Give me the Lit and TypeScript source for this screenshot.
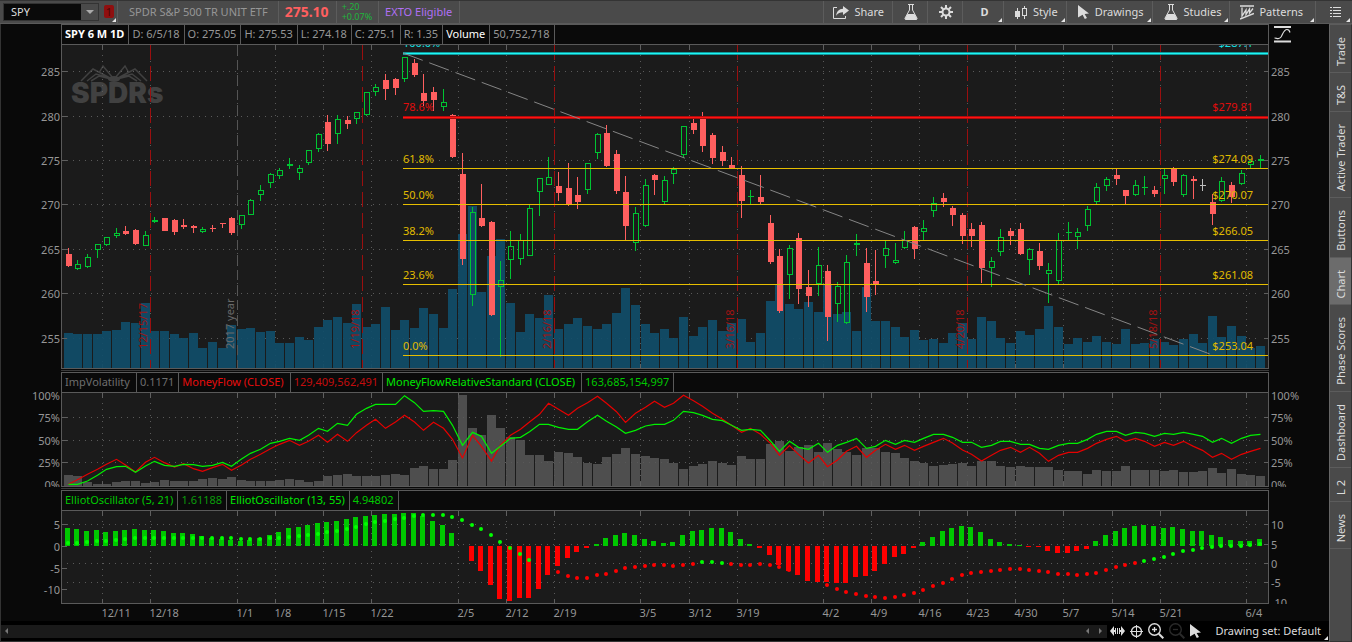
import { LitElement, html, svg, css, nothing } from "lit";
import { customElement, state } from "lit/decorators.js";
import { classMap } from "lit/directives/class-map.js";

type Kind = "g" | "r" | "n";
type Candle = [Kind, number, number, number, number];

/* Vertical positions in the series below are kept in thirds of a pixel. */
const UNIT = 3;

/* kind, high, body top, body bottom, low */
const CANDLES: Candle[] = [
  ["r", 624, 642, 678, 681], ["g", 660, 672, 688, 690], ["g", 642, 651, 682, 684], ["g", 612, 612, 630, 654],
  ["g", 591, 591, 615, 618], ["g", 564, 579, 588, 594], ["r", 558, 573, 582, 585], ["r", 567, 570, 612, 615],
  ["g", 573, 585, 618, 618], ["g", 531, 540, 546, 549], ["r", 534, 534, 573, 573], ["r", 537, 540, 576, 585],
  ["r", 537, 555, 561, 567], ["r", 555, 558, 564, 579], ["g", 561, 567, 576, 579], ["r", 555, 564, 567, 576],
  ["r", 549, 549, 552, 564], ["r", 531, 534, 579, 585], ["g", 525, 525, 555, 567], ["g", 477, 480, 525, 525],
  ["g", 435, 450, 465, 483], ["g", 399, 402, 430, 444], ["g", 384, 390, 408, 417], ["g", 354, 372, 378, 387],
  ["g", 375, 384, 399, 420], ["g", 330, 330, 369, 375], ["g", 279, 282, 327, 336], ["r", 225, 246, 312, 333],
  ["g", 225, 237, 282, 312], ["r", 228, 240, 252, 267], ["g", 216, 216, 237, 252], ["g", 156, 156, 225, 228],
  ["g", 132, 141, 156, 168], ["r", 102, 120, 147, 180], ["r", 114, 117, 144, 165], ["g", 51, 51, 117, 126],
  ["r", 57, 69, 105, 111], ["r", 102, 159, 183, 198], ["r", 141, 156, 180, 213], ["g", 147, 186, 202, 213],
  ["r", 222, 225, 351, 354], ["r", 339, 402, 657, 675], ["g", 501, 516, 765, 798], ["r", 432, 534, 558, 561],
  ["r", 543, 546, 825, 828], ["g", 663, 720, 741, 950], ["g", 573, 618, 660, 717], ["g", 582, 600, 657, 675],
  ["g", 495, 504, 648, 648], ["g", 414, 414, 456, 528], ["g", 351, 411, 435, 435], ["r", 396, 438, 459, 483],
  ["r", 369, 444, 493, 498], ["r", 411, 465, 486, 507], ["g", 369, 369, 450, 462], ["g", 279, 282, 339, 357],
  ["r", 255, 279, 378, 381], ["r", 330, 342, 453, 462], ["r", 408, 456, 558, 601], ["g", 501, 519, 609, 633],
  ["g", 417, 435, 558, 561], ["r", 402, 405, 420, 465], ["g", 408, 420, 486, 492], ["g", 381, 387, 402, 432],
  ["g", 258, 258, 345, 354], ["r", 234, 249, 270, 282], ["r", 216, 234, 318, 336], ["r", 279, 285, 354, 372],
  ["r", 318, 336, 363, 378], ["r", 351, 375, 385, 385], ["r", 378, 405, 483, 534], ["g", 450, 467, 471, 492],
  ["r", 405, 471, 486, 492], ["r", 525, 549, 666, 672], ["r", 627, 648, 813, 819], ["g", 615, 624, 705, 777],
  ["r", 579, 594, 747, 792], ["r", 690, 741, 768, 801], ["g", 621, 675, 732, 768], ["r", 675, 693, 831, 903],
  ["g", 726, 738, 792, 846], ["g", 645, 666, 849, 852], ["g", 582, 609, 615, 648], ["r", 624, 669, 771, 816],
  ["r", 630, 723, 735, 765], ["g", 601, 624, 648, 684], ["g", 609, 660, 669, 672], ["g", 573, 601, 624, 627],
  ["r", 558, 561, 627, 657], ["g", 540, 564, 576, 600], ["g", 471, 489, 513, 531], ["r", 459, 474, 486, 501],
  ["r", 498, 504, 525, 558], ["r", 519, 525, 588, 612], ["r", 549, 567, 588, 621], ["r", 546, 555, 684, 729],
  ["g", 651, 663, 684, 741], ["g", 567, 591, 636, 648], ["r", 564, 573, 588, 615], ["r", 549, 567, 642, 645],
  ["g", 624, 627, 660, 705], ["r", 609, 633, 678, 690], ["g", 669, 690, 702, 789], ["g", 579, 601, 723, 732],
  ["g", 546, 576, 579, 601], ["g", 564, 576, 591, 627], ["g", 498, 507, 558, 573], ["g", 429, 441, 486, 492],
  ["g", 411, 417, 438, 453], ["r", 387, 405, 417, 435], ["r", 450, 450, 468, 492], ["g", 420, 435, 465, 468],
  ["g", 408, 441, 444, 465], ["r", 438, 450, 462, 471], ["g", 387, 405, 417, 462], ["r", 381, 384, 426, 438],
  ["g", 402, 405, 465, 471], ["r", 408, 417, 423, 477], ["n", 417, 435, 438, 453], ["r", 462, 486, 522, 555],
  ["g", 411, 423, 483, 486], ["r", 426, 435, 471, 489], ["g", 390, 399, 432, 435], ["g", 360, 363, 375, 385],
  ["g", 345, 357, 363, 384],
];

const VOLUME = [
  879, 882, 882, 882, 873, 870, 846, 849, 789, 873, 873, 882, 894, 879, 924, 906, 924, 855, 867, 864, 876, 873, 909, 909,
  891, 900, 861, 840, 831, 849, 792, 861, 852, 801, 870, 840, 864, 804, 822, 864, 747, 582, 498, 756, 648, 597, 789, 876,
  822, 834, 765, 867, 852, 834, 858, 867, 852, 819, 744, 795, 852, 879, 867, 894, 831, 888, 861, 840, 873, 849, 837, 906,
  879, 783, 735, 792, 807, 786, 816, 732, 822, 816, 873, 741, 843, 843, 861, 891, 870, 900, 897, 909, 879, 849, 897, 831,
  843, 894, 909, 873, 885, 867, 798, 861, 912, 894, 906, 888, 906, 912, 867, 912, 909, 897, 906, 915, 897, 882, 909, 828,
  891, 858, 888, 924, 918,
];

const IMP_VOL = [
  315, 318, 336, 342, 342, 336, 333, 333, 339, 336, 330, 333, 333, 333, 327, 324, 327, 321, 330, 333, 333, 333, 330, 327,
  330, 336, 333, 318, 315, 312, 318, 318, 318, 315, 312, 315, 294, 288, 297, 297, 270, 75, 174, 195, 135, 174, 201, 210,
  255, 255, 273, 246, 249, 261, 279, 282, 261, 252, 234, 252, 258, 264, 267, 279, 297, 288, 282, 273, 279, 285, 258, 267,
  267, 222, 213, 243, 231, 225, 246, 219, 237, 246, 255, 234, 234, 246, 249, 264, 273, 279, 288, 285, 282, 279, 288, 273,
  273, 288, 291, 288, 291, 291, 291, 300, 303, 303, 312, 300, 303, 303, 288, 300, 300, 300, 303, 300, 306, 306, 303, 294,
  309, 297, 312, 315, 318,
];

const RELATIVE_FLOW = [
  343, 343, 333, 316, 298, 290, 289, 307, 288, 274, 286, 289, 283, 284, 289, 286, 277, 289, 267, 250, 238, 220, 214, 205,
  211, 196, 175, 184, 160, 166, 133, 115, 103, 103, 103, 77, 98, 124, 122, 124, 166, 226, 187, 199, 250, 229, 205, 202,
  185, 163, 163, 172, 178, 178, 155, 136, 154, 171, 190, 181, 168, 163, 163, 151, 124, 128, 136, 148, 152, 166, 181, 178,
  181, 213, 244, 214, 232, 238, 220, 247, 226, 217, 205, 235, 229, 211, 223, 211, 217, 205, 193, 193, 202, 217, 217, 232,
  226, 214, 214, 223, 223, 235, 238, 226, 220, 220, 208, 193, 184, 184, 196, 187, 190, 199, 190, 193, 187, 193, 199, 217,
  205, 220, 205, 196, 193,
];

const MONEY_FLOW = [
  343, 329, 313, 298, 283, 268, 285, 306, 277, 262, 278, 291, 281, 296, 304, 293, 283, 301, 285, 268, 253, 236, 223, 211,
  226, 214, 196, 217, 193, 214, 188, 166, 148, 175, 156, 136, 156, 181, 157, 175, 208, 264, 196, 229, 273, 225, 196, 178,
  156, 133, 100, 118, 136, 115, 98, 79, 100, 125, 157, 130, 112, 94, 112, 100, 76, 92, 109, 130, 148, 166, 187, 175, 193,
  220, 256, 227, 253, 279, 256, 290, 270, 244, 229, 262, 241, 223, 238, 226, 241, 229, 217, 205, 219, 240, 253, 273, 256,
  241, 232, 247, 232, 250, 274, 256, 247, 247, 235, 220, 208, 199, 214, 205, 214, 229, 217, 226, 214, 229, 241, 262, 250,
  268, 253, 244, 235,
];

const OSC_ZERO = 528;
const OSC_FAST = [
  474, 477, 483, 480, 486, 483, 480, 477, 480, 480, 483, 489, 489, 492, 498, 504, 507, 510, 513, 510, 504, 495, 486, 474,
  471, 465, 459, 456, 453, 447, 441, 438, 435, 432, 432, 429, 429, 438, 453, 465, 489, 528, 573, 603, 645, 687, 693, 684,
  684, 657, 615, 588, 564, 546, 534, 522, 504, 495, 489, 495, 507, 513, 519, 516, 495, 483, 480, 474, 474, 486, 507, 522,
  534, 555, 585, 603, 615, 633, 636, 637, 639, 639, 621, 618, 603, 582, 561, 552, 534, 516, 501, 483, 474, 468, 471, 486,
  507, 516, 522, 525, 531, 531, 543, 549, 549, 543, 537, 513, 495, 483, 474, 468, 465, 468, 474, 471, 477, 483, 483, 495,
  501, 510, 513, 513, 507,
];
const OSC_SLOW = [
  519, 519, 516, 513, 513, 510, 507, 504, 504, 504, 504, 504, 504, 504, 504, 504, 504, 504, 507, 507, 507, 504, 504, 501,
  498, 495, 492, 486, 483, 477, 471, 462, 456, 453, 447, 444, 438, 435, 435, 435, 441, 450, 465, 477, 495, 516, 534, 552,
  570, 586, 597, 606, 618, 624, 624, 615, 612, 603, 594, 591, 588, 585, 585, 588, 585, 582, 576, 576, 579, 582, 585, 585,
  582, 585, 591, 600, 609, 618, 630, 645, 657, 666, 672, 678, 681, 684, 681, 675, 669, 660, 648, 639, 627, 615, 609, 606,
  603, 600, 597, 597, 600, 603, 606, 612, 612, 615, 612, 609, 600, 591, 585, 579, 573, 567, 561, 552, 543, 540, 534, 531,
  528, 528, 528, 525, 522,
];
const slowIsUp = (i: number) => i <= 48 || (i >= 66 && i <= 68) || i >= 112;

/* Week starts, as positions between two bars */
const WEEKS: [number, string][] = [
  [3.5, "12/11"], [8.5, "12/18"], [17.5, "1/1"], [21.5, "1/8"], [26.5, "1/15"], [31.5, "1/22"], [40.5, "2/5"],
  [45.5, "2/12"], [50.5, "2/19"], [59.5, "3/5"], [64.5, "3/12"], [69.5, "3/19"], [78.5, "4/2"], [83.5, "4/9"],
  [88.5, "4/16"], [93.5, "4/23"], [98.5, "4/30"], [103.5, "5/7"], [108.5, "5/14"], [113.5, "5/21"], [122.5, "6/4"],
];
const EXPIRATIONS: [number, string][] = [
  [8.5, "12/15/17"], [30.5, "1/19/18"], [50.5, "2/16/18"], [69.5, "3/16/18"], [93.5, "4/20/18"], [113.5, "5/18/18"],
];
const YEAR_START = 17.5;

const PRICES: [number, string][] = [
  [26, "285"], [71, "280"], [115, "275"], [159, "270"], [204, "265"], [248, "260"], [293, "255"],
];
const FIBS: [number, string, string, string][] = [
  [8, "100.0%", "$287.1", "cyan"], [72, "78.6%", "$279.81", "red"], [123, "61.8%", "$274.09", "gold"],
  [159, "50.0%", "$270.07", "gold"], [195, "38.2%", "$266.05", "gold"], [239, "23.6%", "$261.08", "gold"],
  [310, "0.0%", "$253.04", "gold"],
];

/* Chart geometry */
const AXIS = 60;
const SLOTS = 125.45;
const PRICE_H = 324;
const FLOW_H = 94;
const OSC_H = 110;
const OSC_PLOT = 93;

@customElement("chart-icon")
class ChartIcon extends LitElement {
  static properties = { name: {} };
  declare name: string;
  static styles = css`
    :host { display: inline-flex; color: #dcdcdc; }
    svg { display: block; }
    .fill { fill: currentColor; }
    .line { fill: none; stroke: currentColor; }
  `;
  render() {
    switch (this.name) {
      case "share":
        return html`<svg width="16" height="13" viewBox="0 0 16 13">
          <path class="line" d="M4 1.500H.5V12.500H12.500V10" />
          <path class="fill" d="M10 0L16 4.500L10 9V6.200C7 6.200 5 7 3.200 9.800C3.400 5.600 6 3 10 2.800Z" />
        </svg>`;
      case "flask":
        return html`<svg width="14" height="16" viewBox="0 0 14 16">
          <path class="line" d="M4 .5H10M5.500 .5V6L1 14.200C.8 15 1 15.500 2 15.500H12C13 15.500 13.200 15 13 14.200L8.500 6V.5" />
          <path class="fill" d="M3.500 10H10.500L13 14.500V15.500H1V14.500Z" />
        </svg>`;
      case "gear":
        return html`<svg width="14" height="14" viewBox="0 0 14 14">
          <g stroke="currentColor" stroke-width="2">
            <path d="M7 0V3M7 11V14M0 7H3M11 7H14M2 2L4.200 4.200M9.800 9.800L12 12M12 2L9.800 4.200M4.200 9.800L2 12" />
            <circle cx="7" cy="7" r="3.500" fill="none" />
          </g>
        </svg>`;
      case "style":
        return html`<svg width="12" height="13" viewBox="0 0 12 13" shape-rendering="crispEdges">
          <path class="fill" d="M2 2h1v11h-1zM0 5h5v6h-5z" />
          <path class="fill" d="M9 0h1v3h-1zM9 9h1v4h-1z" />
          <path class="line" d="M7.500 2.500h4v7h-4z" />
        </svg>`;
      case "cursor":
        return html`<svg width="11" height="14" viewBox="0 0 11 14">
          <path class="fill" d="M0 0L11 8.500L6.600 9L9 13L6.800 14L4.600 9.800L0 12.500Z" />
        </svg>`;
      case "patterns":
        return html`<svg width="14" height="15" viewBox="0 0 14 15">
          <path class="line" stroke-width="1.500" d="M0 1H14M0 14L14 8.500" />
          <path class="line" stroke-width="1.300" d="M2 2.500V11L6 5V9.500L9.500 4V8L13 3.500" />
        </svg>`;
      case "list":
        return html`<svg width="11" height="10" viewBox="0 0 11 10" shape-rendering="crispEdges">
          <path class="fill" d="M0 0h2v1h-2zM3 0h8v1h-8zM0 3h2v1h-2zM3 3h8v1h-8zM0 6h2v1h-2zM3 6h8v1h-8zM0 9h2v1h-2zM3 9h8v1h-8z" />
        </svg>`;
      case "curve":
        return html`<svg width="17" height="17" viewBox="0 0 17 17">
          <path class="fill" d="M0 0h17v2h-17zM0 14.500h17v2h-17z" />
          <path class="line" stroke-width="1.200" d="M.5 12C3 12 5 14 7 11C9 7.500 10 3.500 13 3.500C15 3.500 15.500 4.500 16 6.500" />
        </svg>`;
      case "expand":
        return html`<svg width="15" height="10" viewBox="0 0 15 10">
          <path class="fill" d="M0 5L4 0V10ZM15 5L11 0V10Z" />
          <path class="fill" d="M4 4h1v2h-1zM5 2h1v6h-1zM7 2h1v6h-1zM9 2h1v6h-1zM10 4h1v2h-1z" />
        </svg>`;
      case "cross":
        return html`<svg width="13" height="13" viewBox="0 0 13 13">
          <circle class="line" cx="6.500" cy="6.500" r="5" stroke-width="1.300" />
          <path class="line" d="M6.500 0V13M0 6.500H13" />
        </svg>`;
      case "zoom-in":
      case "zoom-out":
        return html`<svg width="16" height="16" viewBox="0 0 16 16">
          <circle class="line" cx="6.500" cy="6.500" r="5.800" stroke-width="1.400" />
          <path class="line" stroke-width="2" d="M10.800 10.800L15.300 15.300" />
          <path class="line" stroke-width="1.300" d=${this.name === "zoom-in" ? "M6.500 4V9M4 6.500H9" : "M4 6.500H9"} />
        </svg>`;
      case "prev":
        return html`<svg width="3" height="6" viewBox="0 0 3 6"><path class="fill" d="M3 0V6L0 3Z" /></svg>`;
      case "next":
        return html`<svg width="3" height="6" viewBox="0 0 3 6"><path class="fill" d="M0 0V6L3 3Z" /></svg>`;
      case "down":
        return html`<svg width="8" height="4" viewBox="0 0 8 4"><path class="fill" d="M0 0H8L4 4Z" /></svg>`;
    }
    return nothing;
  }
}

@customElement("app-root")
class AppRoot extends LitElement {
  @state() private width = 1328;
  private observer?: ResizeObserver;

  static styles = css`
    :host {
      display: flex;
      flex-direction: column;
      min-height: 100vh;
      box-sizing: border-box;
      background: #090909;
      color: #969696;
      font: 11px/14px "Noto Sans", "Open Sans", sans-serif;
    }
    * { box-sizing: border-box; }
    button, input { font: inherit; color: inherit; border: 0; margin: 0; padding: 0; background: none; border-radius: 0; }

    .toolbar {
      display: flex;
      height: 24px;
      padding: 0 1px;
      background: #4a4a4a;
      border-top: 1px solid #343434;
      border-bottom: 1px solid #5a5a5a;
    }
    .combo {
      display: flex;
      width: 96px;
      height: 18px;
      margin: 2px 4px 0 2px;
      background: #0a0a0a;
      border: 1px solid #333;
      color: #dedede;
    }
    .combo input { flex: 1; min-width: 0; padding-left: 7px; }
    .combo button { display: flex; align-items: center; justify-content: center; width: 17px; background: #4a4a4a; }
    .combo chart-icon { color: #aaa; }
    .cell { position: relative; display: flex; align-items: center; border-right: 1px solid #5c5c5c; padding: 0 7px 0 6px; }
    .cell.flag { padding: 0 3px 0 1px; align-items: flex-start; }
    .badge { width: 10px; height: 13px; margin-top: 4px; background: #8f0f0f; color: #4a0606; text-align: center; line-height: 13px; border-radius: 2px; }
    .cell.title { padding: 0 10px 0 11px; }
    .price { font-size: 14px; font-weight: 700; color: #ff5f5f; }
    .cell.change { flex-direction: column; align-items: flex-start; justify-content: center; padding: 0 6px 0 5px; font-size: 9px; line-height: 10px; color: #1fb53c; }
    .tag { color: #b070f5; }
    .tools { display: flex; margin-left: auto; border-left: 1px solid #5c5c5c; color: #dcdcdc; }
    .tool { position: relative; display: flex; align-items: center; justify-content: center; gap: 5px; min-width: 35px; padding: 0 8px 0 9px; border-right: 1px solid #5c5c5c; color: #dcdcdc; }
    .tool.more { padding: 0 8px 0 11px; gap: 6px; }
    .tool.period { width: 41px; font-weight: 700; }
    .tool.wide { padding: 0 12px 0 10px; gap: 5px; }
    .tool.last { border-right: 0; }
    .more::after {
      content: "";
      position: absolute;
      right: 1px;
      bottom: 1px;
      border-left: 4px solid transparent;
      border-bottom: 4px solid #e6e6e6;
    }

    .body { display: flex; flex: 1; }
    .charts { flex: 1; min-width: 0; display: flex; flex-direction: column; border-left: 1px solid #333; }
    .pane-head { position: relative; display: flex; height: 21px; margin: 0 60px; border: 1px solid #5a5a5a; background: #0a0a0a; }
    .pane-head span { display: flex; align-items: center; padding: 0 4px 2px 3px; border-right: 1px solid #5a5a5a; white-space: nowrap; }
    .pane-head .white { color: #fff; }
    .pane-head .strong { font-weight: 700; }
    .pane-head .label { padding-right: 6px; }
    .pane-head .dim { color: #6e6e6e; }
    .pane-head .c-red { color: #e60d0d; }
    .pane-head .c-red2 { color: #c40d0d; }
    .pane-head .c-green { color: #00e600; }
    .pane-head .c-green2 { color: #00c800; }
    .pane-head .c-green3 { color: #0a9c0a; }
    .pane-head button { position: absolute; display: flex; right: -23px; top: 1px; }
    .divider { height: 3px; margin: 0 60px; border-top: 1px solid #090909; border-bottom: 1px solid #090909; background: #3a3a3a; }
    svg.plot { display: block; width: 100%; }
    svg.open { overflow: visible; }

    .bg { fill: #1b1b1b; }
    .frame { fill: none; stroke: #5a5a5a; }
    .tick { stroke: #5f5f5f; }
    .dots { stroke: #5a5a5a; stroke-dasharray: 1 5; }
    .crisp { shape-rendering: crispEdges; }
    .axis { fill: #969696; }
    .end { text-anchor: end; }
    .vol { fill: #104d69; fill-opacity: 0.92; }
    .iv { fill: #575757; fill-opacity: 0.86; }
    .exp { stroke: #9a0f0f; stroke-dasharray: 15 6; }
    .exp-text { fill: #a01212; }
    .year { stroke: #555; stroke-dasharray: 10 5; }
    .year-text { fill: #6a6a6a; }
    .up { stroke: #00c432; fill: none; }
    .down { stroke: #ff5f5f; fill: #ff5f5f; }
    .flat { stroke: #bdbdbd; fill: none; }
    .fib-gold { stroke: #e6be00; }
    .fib-cyan { stroke: #1ff5f5; }
    .fib-red { stroke: #ff1212; }
    .glow-cyan { stroke: #109a9c; stroke-width: 3; }
    .glow-red { stroke: #b00d0d; stroke-width: 3; }
    .text-gold { fill: #e0bb00; }
    .text-cyan { fill: #12e0e4; }
    .text-red { fill: #e00d0d; }
    .trend { stroke: #858585; stroke-dasharray: 21 7; }
    .mf { fill: none; stroke: #e60000; stroke-width: 1.2; }
    .mfr { fill: none; stroke: #00f000; stroke-width: 1.2; }
    .osc-up { fill: #00c800; }
    .osc-down { fill: #ff0000; }
    .dot-up { fill: #00ff00; }
    .dot-down { fill: #ff0000; }
    .logo { fill: #414141; font: 900 28px/1 Inter, sans-serif; }
    .logo-mark { fill: none; stroke: #414141; stroke-width: 1.5; }
    .logo-body { fill: #414141; }

    .footer { display: flex; align-items: center; height: 21px; margin-top: auto; background: #000; border-bottom: 1px solid #333; color: #dcdcdc; }
    .scroll { flex: 1; display: flex; align-items: center; height: 13px; gap: 10px; padding: 0 5px 0 4px; background: #1a1a1a; }
    .scroll button:first-child { margin-right: auto; }
    .scroll chart-icon { color: #777; }
    .footer .icons { display: flex; align-items: center; gap: 5px; margin: 0 15px 0 3px; }
    .footer button { display: flex; align-items: center; }
    .off chart-icon { color: #2a2a2a; }
    .footer .set { position: relative; height: 100%; padding-right: 8px; }

    .tabs { display: flex; flex-direction: column; width: 23px; background: #4a4a4a; border: 1px solid #333; border-left-color: #666; border-top-color: #5c5c5c; }
    .tab { display: flex; align-items: center; justify-content: center; padding: 12px 0 6px; border-bottom: 1px solid #5c5c5c; color: #dcdcdc; }
    .tab.active { background: #6c6c6c; }
    .tab span { writing-mode: vertical-rl; transform: rotate(180deg); }
  `;

  connectedCallback() {
    super.connectedCallback();
    this.observer = new ResizeObserver(() => this.measure());
    this.observer.observe(this);
  }
  disconnectedCallback() {
    super.disconnectedCallback();
    this.observer?.disconnect();
  }
  firstUpdated() {
    this.measure();
  }
  private measure() {
    const el = this.renderRoot.querySelector(".charts");
    if (el && el.clientWidth) this.width = el.clientWidth;
  }

  private get left() { return AXIS + 1; }
  private get right() { return this.width - AXIS - 1; }
  private slot(i: number) {
    return this.left + 6.3 + (i * (this.right - this.left)) / SLOTS;
  }
  private bar(i: number) { return Math.floor(this.slot(i)); }
  private edge(i: number) { return Math.floor(this.slot(i) + 0.7) + 0.5; }

  private grid(height: number, rows: number[]) {
    return svg`
      ${WEEKS.map(([i]) => svg`
        <line class="tick" x1=${this.edge(i)} x2=${this.edge(i)} y1="0" y2="5" />
        <line class="dots" x1=${this.edge(i)} x2=${this.edge(i)} y1="10" y2=${height - 5} />
        <line class="tick" x1=${this.edge(i)} x2=${this.edge(i)} y1=${height - 5} y2=${height - 1} />`)}
      ${rows.map((y) => svg`<line class="dots" x1=${this.left + 5} x2=${this.right - 8} y1=${y + 0.5} y2=${y + 0.5} />`)}`;
  }

  private frame(height: number) {
    return svg`<path class="frame" d="M${AXIS + 0.5} 0V${height - 0.5}H${this.right + 0.5}V0" />`;
  }

  private leftTicks(rows: number[]) {
    return rows.map((y) => svg`<line class="tick" x1=${this.left} x2=${this.left + 5} y1=${y + 0.5} y2=${y + 0.5} />`);
  }
  private rightTicks(rows: number[]) {
    return rows.map((y) => svg`<line class="tick" x1=${this.right - 4} x2=${this.right} y1=${y + 0.5} y2=${y + 0.5} />`);
  }
  private leftLabels(rows: [number, string][]) {
    return rows.map(([y, t]) => svg`<text class="axis end" x=${AXIS - 1} y=${y + 5}>${t}</text>`);
  }
  private rightLabels(rows: [number, string][]) {
    return rows.map(([y, t]) => svg`<text class="axis" x=${this.right + 3} y=${y + 5}>${t}</text>`);
  }

  private candle([kind, high, top, bottom, low]: Candle, i: number) {
    const y = (v: number) => Math.round(v / UNIT - 5);
    const x = this.bar(i);
    const [h, t, b, l] = [y(high), y(top), y(bottom), y(low)];
    const size = Math.max(1, b - t);
    const cls = kind === "g" ? "up" : kind === "r" ? "down" : "flat";
    return svg`<g class=${cls}>
      ${h < t ? svg`<line x1=${x + 0.5} x2=${x + 0.5} y1=${h} y2=${t} />` : nothing}
      ${l > b ? svg`<line x1=${x + 0.5} x2=${x + 0.5} y1=${b} y2=${l} />` : nothing}
      ${size < 2
        ? svg`<line x1=${x - 2} x2=${x + 4} y1=${t + 0.5} y2=${t + 0.5} />`
        : svg`<rect x=${x - 1.5} y=${t + 0.5} width="5" height=${size - 1} />`}
    </g>`;
  }

  private pricePane() {
    const rows = PRICES.map(([y]) => y);
    const fibX = Math.round(this.slot(34.8));
    const bottom = PRICE_H - 1;
    return html`<svg class="plot" height=${PRICE_H} role="img" aria-label="SPY daily price and volume">
      <rect class="bg" x=${this.left} width=${this.right - this.left} y="0" height=${PRICE_H} />
      <g transform="translate(59 0)">
        <g class="logo-mark">
          <path d="M21 36L33 24L50 33M27 36L36 29L50 33M31 36L39 31L51 34M39 28L43 21L53 33" />
          <path d="M87 36L75 24L58 33M81 36L72 29L58 33M77 36L69 31L57 34M69 28L65 21L55 33" />
        </g>
        <ellipse class="logo-body" cx="54" cy="34" rx="6" ry="3" />
      </g>
      <text class="logo" x="70" y="58">SPDRs</text>
      <g class="crisp">
        ${this.grid(PRICE_H, rows)}
        ${VOLUME.map((v, i) => {
          const t = Math.round(v / UNIT - 5);
          return svg`<rect class="vol" x=${this.bar(i) - 4} width="9" y=${t} height=${bottom - t} />`;
        })}
        <line class="year" x1=${this.edge(YEAR_START)} x2=${this.edge(YEAR_START)} y1="0" y2=${bottom} />
        ${EXPIRATIONS.map(([i]) => svg`<line class="exp" x1=${this.edge(i)} x2=${this.edge(i)} y1="0" y2=${bottom} />`)}
        ${this.leftTicks(rows)}${this.rightTicks(rows)}
        ${CANDLES.map((c, i) => this.candle(c, i))}
      </g>
      <text class="year-text" transform="translate(${this.edge(YEAR_START) - 4} 304) rotate(-90)">2017 year</text>
      ${EXPIRATIONS.map(([i, t]) => svg`<text class="exp-text" transform="translate(${this.edge(i) - 4} 304) rotate(-90)">${t}</text>`)}
      <g class="crisp">
        ${FIBS.map(([y, , , c]) => svg`
          ${c !== "gold" ? svg`<line class="glow-${c}" x1=${fibX} x2=${this.right} y1=${y + 0.5} y2=${y + 0.5} />` : nothing}
          <line class="fib-${c}" x1=${fibX} x2=${this.right} y1=${y + 0.5} y2=${y + 0.5} />`)}
      </g>
      <line class="trend" x1=${fibX} y1="8" x2=${this.slot(118.75)} y2="309" />
      ${FIBS.map(([y, p, v, c]) => {
        const base = y - (c === "gold" ? 5 : 6);
        return svg`
          <text class="text-${c}" x=${fibX} y=${base}>${p}</text>
          <text class="text-${c} end" x=${this.right - 15} y=${base}>${v}</text>`;
      })}
      <g class="crisp">${this.frame(PRICE_H)}</g>
      ${this.leftLabels(PRICES)}${this.rightLabels(PRICES)}
    </svg>`;
  }

  private flowPane() {
    const rows = [24, 47, 69];
    const labels: [number, string][] = [[2, "100%"], [24, "75%"], [47, "50%"], [69, "25%"]];
    const floor: [number, string][] = [[91, "0%"]];
    const path = (s: number[]) => s.map((v, i) => `${this.bar(i) + 0.5},${v / UNIT - 23}`).join(" ");
    return html`<svg class="plot open" height=${FLOW_H} role="img" aria-label="Implied volatility and money flow">
      <defs><clipPath id="flow-clip"><rect x="0" y="0" width=${this.width} height=${FLOW_H} /></clipPath></defs>
      <rect class="bg" x=${this.left} width=${this.right - this.left} y="0" height=${FLOW_H} />
      <g class="crisp">
        ${this.grid(FLOW_H, rows)}
        ${IMP_VOL.map((v, i) => {
          const t = Math.round(v / UNIT - 23);
          return svg`<rect class="iv" x=${this.bar(i) - 4} width="9" y=${t} height=${FLOW_H - 1 - t} />`;
        })}
        ${this.leftTicks(rows)}${this.rightTicks(rows)}
      </g>
      <polyline class="mf" points=${path(MONEY_FLOW)} />
      <polyline class="mfr" points=${path(RELATIVE_FLOW)} />
      <g class="crisp">${this.frame(FLOW_H)}</g>
      ${this.leftLabels(labels)}${this.rightLabels(labels)}
      <g clip-path="url(#flow-clip)">${this.leftLabels(floor)}${this.rightLabels(floor)}</g>
    </svg>`;
  }

  private oscPane() {
    const rows = [13, 33, 52, 71];
    const leftRows: [number, string][] = [[13, "5"], [35, "0"], [57, "-5"], [78, "-10"]];
    const rightRows: [number, string][] = [[13, "10"], [33, "5"], [52, "0"], [71, "-5"]];
    const y = (v: number) => Math.round(v / UNIT - 141);
    const zero = y(OSC_ZERO);
    return html`<svg class="plot" height=${OSC_H} role="img" aria-label="Elliot oscillators">
      <defs><clipPath id="osc-clip"><rect x="0" y="0" width=${this.width} height=${OSC_PLOT} /></clipPath></defs>
      <rect class="bg" x=${this.left} width=${this.right - this.left} y="0" height=${OSC_PLOT} />
      <g class="crisp">
        ${this.grid(OSC_PLOT, rows)}
        ${OSC_FAST.map((v, i) => {
          const e = y(v);
          return svg`<rect class=${e > zero ? "osc-down" : "osc-up"} x=${this.bar(i) - 3} width="5" y=${Math.min(e, zero)} height=${Math.abs(e - zero)} />`;
        })}
        ${this.leftTicks(leftRows.map(([r]) => r))}${this.rightTicks(rows)}
      </g>
      ${OSC_SLOW.map((v, i) => svg`<circle class=${slowIsUp(i) ? "dot-up" : "dot-down"} cx=${this.bar(i)} cy=${y(v)} r="2" />`)}
      <g class="crisp">${this.frame(OSC_PLOT)}</g>
      ${this.leftLabels(leftRows)}${this.rightLabels(rightRows)}
      <g clip-path="url(#osc-clip)">${this.rightLabels([[91, "-10"]])}</g>
      ${WEEKS.map(([i, t]) => svg`<text class="axis" x=${this.edge(i) - 1} y="106">${t}</text>`)}
    </svg>`;
  }

  private tool(icon: string, label: string, cls: Record<string, boolean> = {}, text = true) {
    return html`<button class=${classMap({ tool: true, ...cls })} aria-label=${label}>
      ${icon ? html`<chart-icon name=${icon}></chart-icon>` : nothing}${text ? label : nothing}
    </button>`;
  }

  render() {
    const tabs = ["Trade", "T&S", "Active Trader", "Buttons", "Chart", "Phase Scores", "Dashboard", "L 2", "News"];
    return html`
      <header class="toolbar">
        <div class="combo">
          <input type="text" value="SPY" aria-label="Symbol" />
          <button aria-label="Choose symbol"><chart-icon name="down"></chart-icon></button>
        </div>
        <div class="cell flag more"><span class="badge">1</span></div>
        <div class="cell title">SPDR S&amp;P 500 TR UNIT ETF</div>
        <div class="cell price">275.10</div>
        <div class="cell change"><span>+.20</span><span>+0.07%</span></div>
        <div class="cell tag">EXTO Eligible</div>
        <div class="tools">
          ${this.tool("share", "Share")}
          ${this.tool("flask", "Edit studies", {}, false)}
          ${this.tool("gear", "Settings", {}, false)}
          ${this.tool("", "D", { more: true, period: true })}
          ${this.tool("style", "Style", { more: true })}
          ${this.tool("cursor", "Drawings", { more: true })}
          ${this.tool("flask", "Studies", { more: true })}
          ${this.tool("patterns", "Patterns", { more: true, wide: true })}
          ${this.tool("list", "Menu", { more: true, last: true }, false)}
        </div>
      </header>
      <div class="body">
        <main class="charts">
          <div class="pane-head">
            <span class="white strong">SPY 6 M 1D</span><span>D: 6/5/18</span><span>O: 275.05</span><span>H: 275.53</span>
            <span>L: 274.18</span><span>C: 275.1</span><span>R: 1.35</span><span class="white">Volume</span><span>50,752,718</span>
            <button aria-label="Fit scale"><chart-icon name="curve"></chart-icon></button>
          </div>
          ${this.pricePane()}
          <div class="divider"></div>
          <div class="pane-head">
            <span class="dim label">ImpVolatility</span><span class="dim">0.1171</span>
            <span class="c-red label">MoneyFlow (CLOSE)</span><span class="c-red2">129,409,562,491</span>
            <span class="c-green label">MoneyFlowRelativeStandard (CLOSE)</span><span class="c-green2">163,685,154,997</span>
          </div>
          ${this.flowPane()}
          <div class="divider"></div>
          <div class="pane-head">
            <span class="c-green2">ElliotOscillator (5, 21)</span><span class="c-green3">1.61188</span>
            <span class="c-green">ElliotOscillator (13, 55)</span><span class="c-green2">4.94802</span>
          </div>
          ${this.oscPane()}
          <footer class="footer">
            <div class="scroll">
              <button aria-label="Scroll back"><chart-icon name="prev"></chart-icon></button>
              <button aria-label="Previous"><chart-icon name="prev"></chart-icon></button>
              <button aria-label="Next"><chart-icon name="next"></chart-icon></button>
            </div>
            <div class="icons">
              <button aria-label="Expand"><chart-icon name="expand"></chart-icon></button>
              <button aria-label="Crosshair"><chart-icon name="cross"></chart-icon></button>
              <button aria-label="Zoom in"><chart-icon name="zoom-in"></chart-icon></button>
              <button class="off" aria-label="Zoom out"><chart-icon name="zoom-out"></chart-icon></button>
              <button aria-label="Pointer"><chart-icon name="cursor"></chart-icon></button>
            </div>
            <button class="set more">Drawing set: Default</button>
          </footer>
        </main>
        <nav class="tabs">
          ${tabs.map((t) => html`<button class=${classMap({ tab: true, active: t === "Chart" })}><span>${t}</span></button>`)}
        </nav>
      </div>
    `;
  }
}
